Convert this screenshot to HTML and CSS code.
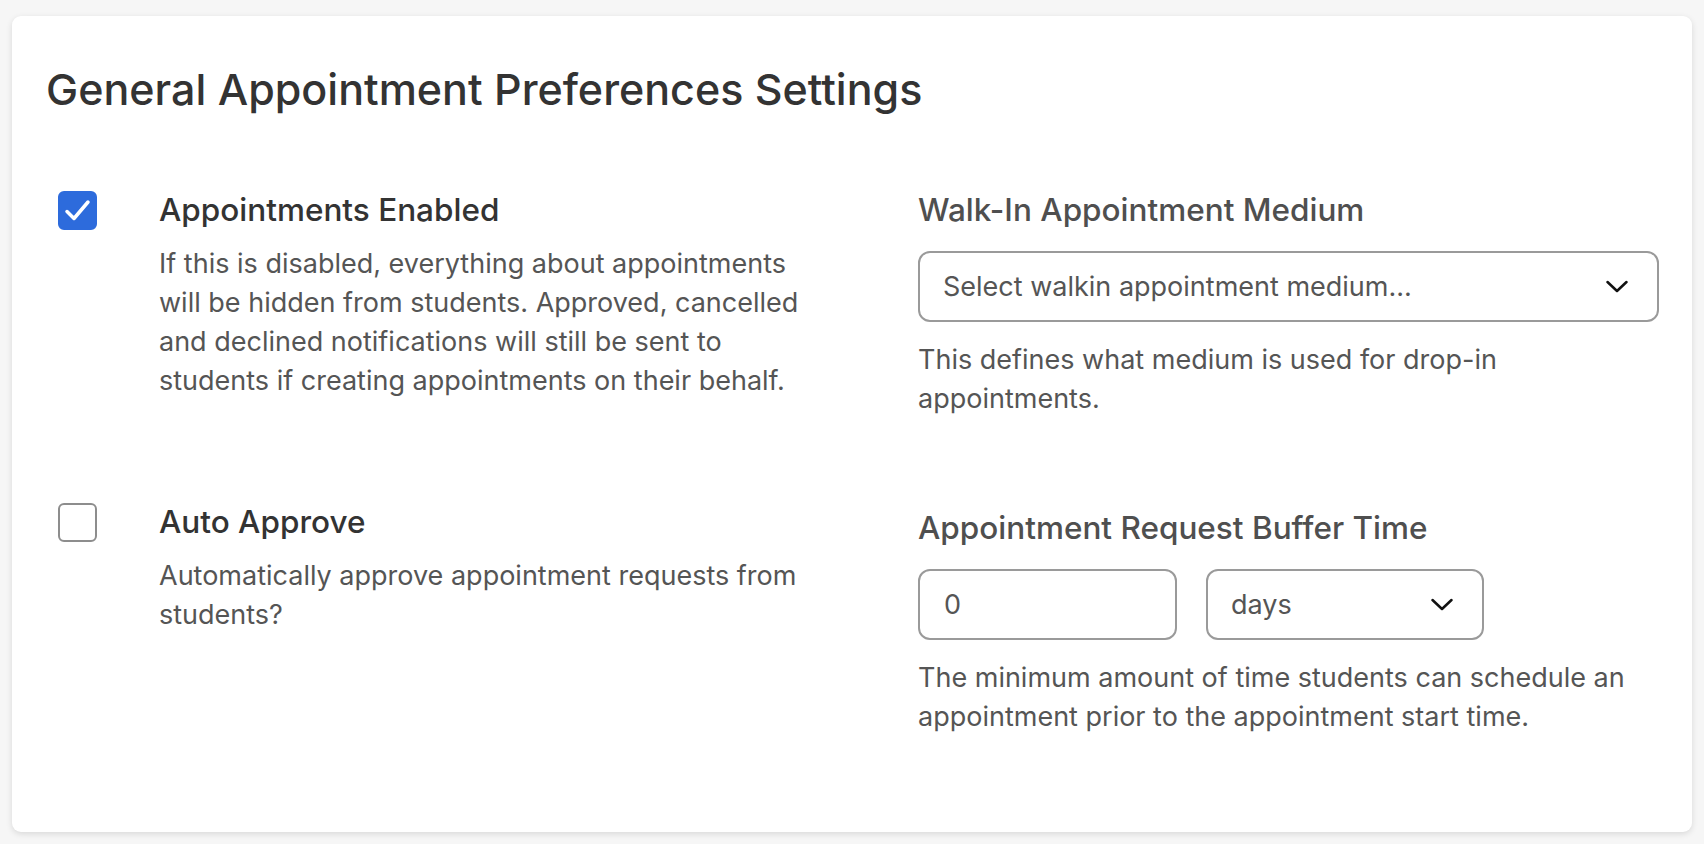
FILE: index.html
```html
<!DOCTYPE html>
<html lang="en">
    <head>
        <meta charset="UTF-8">
        <title>General Appointment Preferences Settings</title>
        <link rel="stylesheet" href="styles.css">
    </head>
    <body>
        <div class="card">
            <h1 class="title">General Appointment Preferences Settings</h1>

            <div class="grid">
                <!-- row 1 -->
                <div class="check-item">
                    <span class="box checked">
                        <svg width="39" height="39" viewBox="0 0 39 39"><path d="M9 20.5 L16 27.5 L30 11" fill="none" stroke="#fff" stroke-width="3.5" stroke-linecap="round" stroke-linejoin="round"/></svg>
                    </span>
                    <div class="check-text">
                        <h4>Appointments Enabled</h4>
                        <p>If this is disabled, everything about appointments will be hidden from students. Approved, cancelled and declined notifications will still be sent to students if creating appointments on their behalf.</p>
                    </div>
                </div>
                <div class="field">
                    <h4>Walk-In Appointment Medium</h4>
                    <div class="select wide">
                        <span>Select walkin appointment medium...</span>
                        <svg class="chev" width="22" height="13" viewBox="0 0 22 13"><path d="M1.5 2 L11 11 L20.5 2" fill="none" stroke="#111" stroke-width="2.5" stroke-linecap="round" stroke-linejoin="round"/></svg>
                    </div>
                    <p>This defines what medium is used for drop-in appointments.</p>
                </div>

                <!-- row 2 -->
                <div class="check-item">
                    <span class="box"></span>
                    <div class="check-text">
                        <h4>Auto Approve</h4>
                        <p>Automatically approve appointment requests from students?</p>
                    </div>
                </div>
                <div class="field second">
                    <h4>Appointment Request Buffer Time</h4>
                    <div class="inline">
                        <div class="input">0</div>
                        <div class="select small">
                            <span>days</span>
                            <svg class="chev" width="22" height="13" viewBox="0 0 22 13"><path d="M1.5 2 L11 11 L20.5 2" fill="none" stroke="#111" stroke-width="2.5" stroke-linecap="round" stroke-linejoin="round"/></svg>
                        </div>
                    </div>
                    <p>The minimum amount of time students can schedule an appointment prior to the appointment start time.</p>
                </div>
            </div>
        </div>
    </body>
</html>
```

FILE: styles.css
```css
html, body {
    margin: 0;
    padding: 0;
}

body {
    background: #f6f6f6;
    font-family: Inter, "Noto Sans", "Liberation Sans", sans-serif;
    color: #333;
    padding: 16px 12px 12px 12px;
}

.card {
    background: #fff;
    border-radius: 9px;
    box-shadow: 0 2px 6px rgba(0, 0, 0, 0.12);
    height: 816px;
    box-sizing: border-box;
    padding: 0 34px;
}

.title {
    margin: 0;
    padding-top: 47px;
    font-size: 43px;
    font-weight: 500;
    line-height: 52px;
    color: #333;
}

.grid {
    display: grid;
    grid-template-columns: 822px 1fr;
    column-gap: 50px;
    row-gap: 84px;
    margin-top: 75px;
}

.check-item {
    display: flex;
    align-items: flex-start;
}

.box {
    flex: none;
    width: 39px;
    height: 39px;
    margin-top: 1px;
    margin-left: 12px;
    margin-right: 62px;
    box-sizing: border-box;
    border: 2px solid #8d8d8d;
    border-radius: 6px;
    display: flex;
    align-items: center;
    justify-content: center;
}

.box.checked {
    background: #2d6bdc;
    border-color: #2d6bdc;
}

.box.checked svg {
    flex: none;
}

.check-text {
    width: 652px;
}

h4 {
    margin: 0;
    font-size: 31.5px;
    font-weight: 500;
    line-height: 40px;
}

.check-text h4 {
    color: #333;
}

.field h4 {
    color: #4f4f4f;
}

p {
    margin: 0;
    font-size: 27px;
    line-height: 39px;
    color: #555;
}

.check-text p {
    margin-top: 14px;
}

.field.second {
    padding-top: 6px;
}

.select, .input {
    box-sizing: border-box;
    height: 71px;
    border: 2px solid #9a9a9a;
    border-radius: 12px;
    display: flex;
    align-items: center;
    font-size: 27px;
    color: #555;
}

.select {
    justify-content: space-between;
    padding: 0 29px 0 23px;
}

.select.wide {
    margin-top: 21px;
    width: 741px;
}

.select.wide + p {
    margin-top: 18px;
}

.inline {
    display: flex;
    gap: 29px;
    margin-top: 21px;
}

.input {
    width: 259px;
    padding: 0 24px;
}

.select.small {
    width: 278px;
    padding-left: 23px;
}

.inline + p {
    margin-top: 18px;
}
```
